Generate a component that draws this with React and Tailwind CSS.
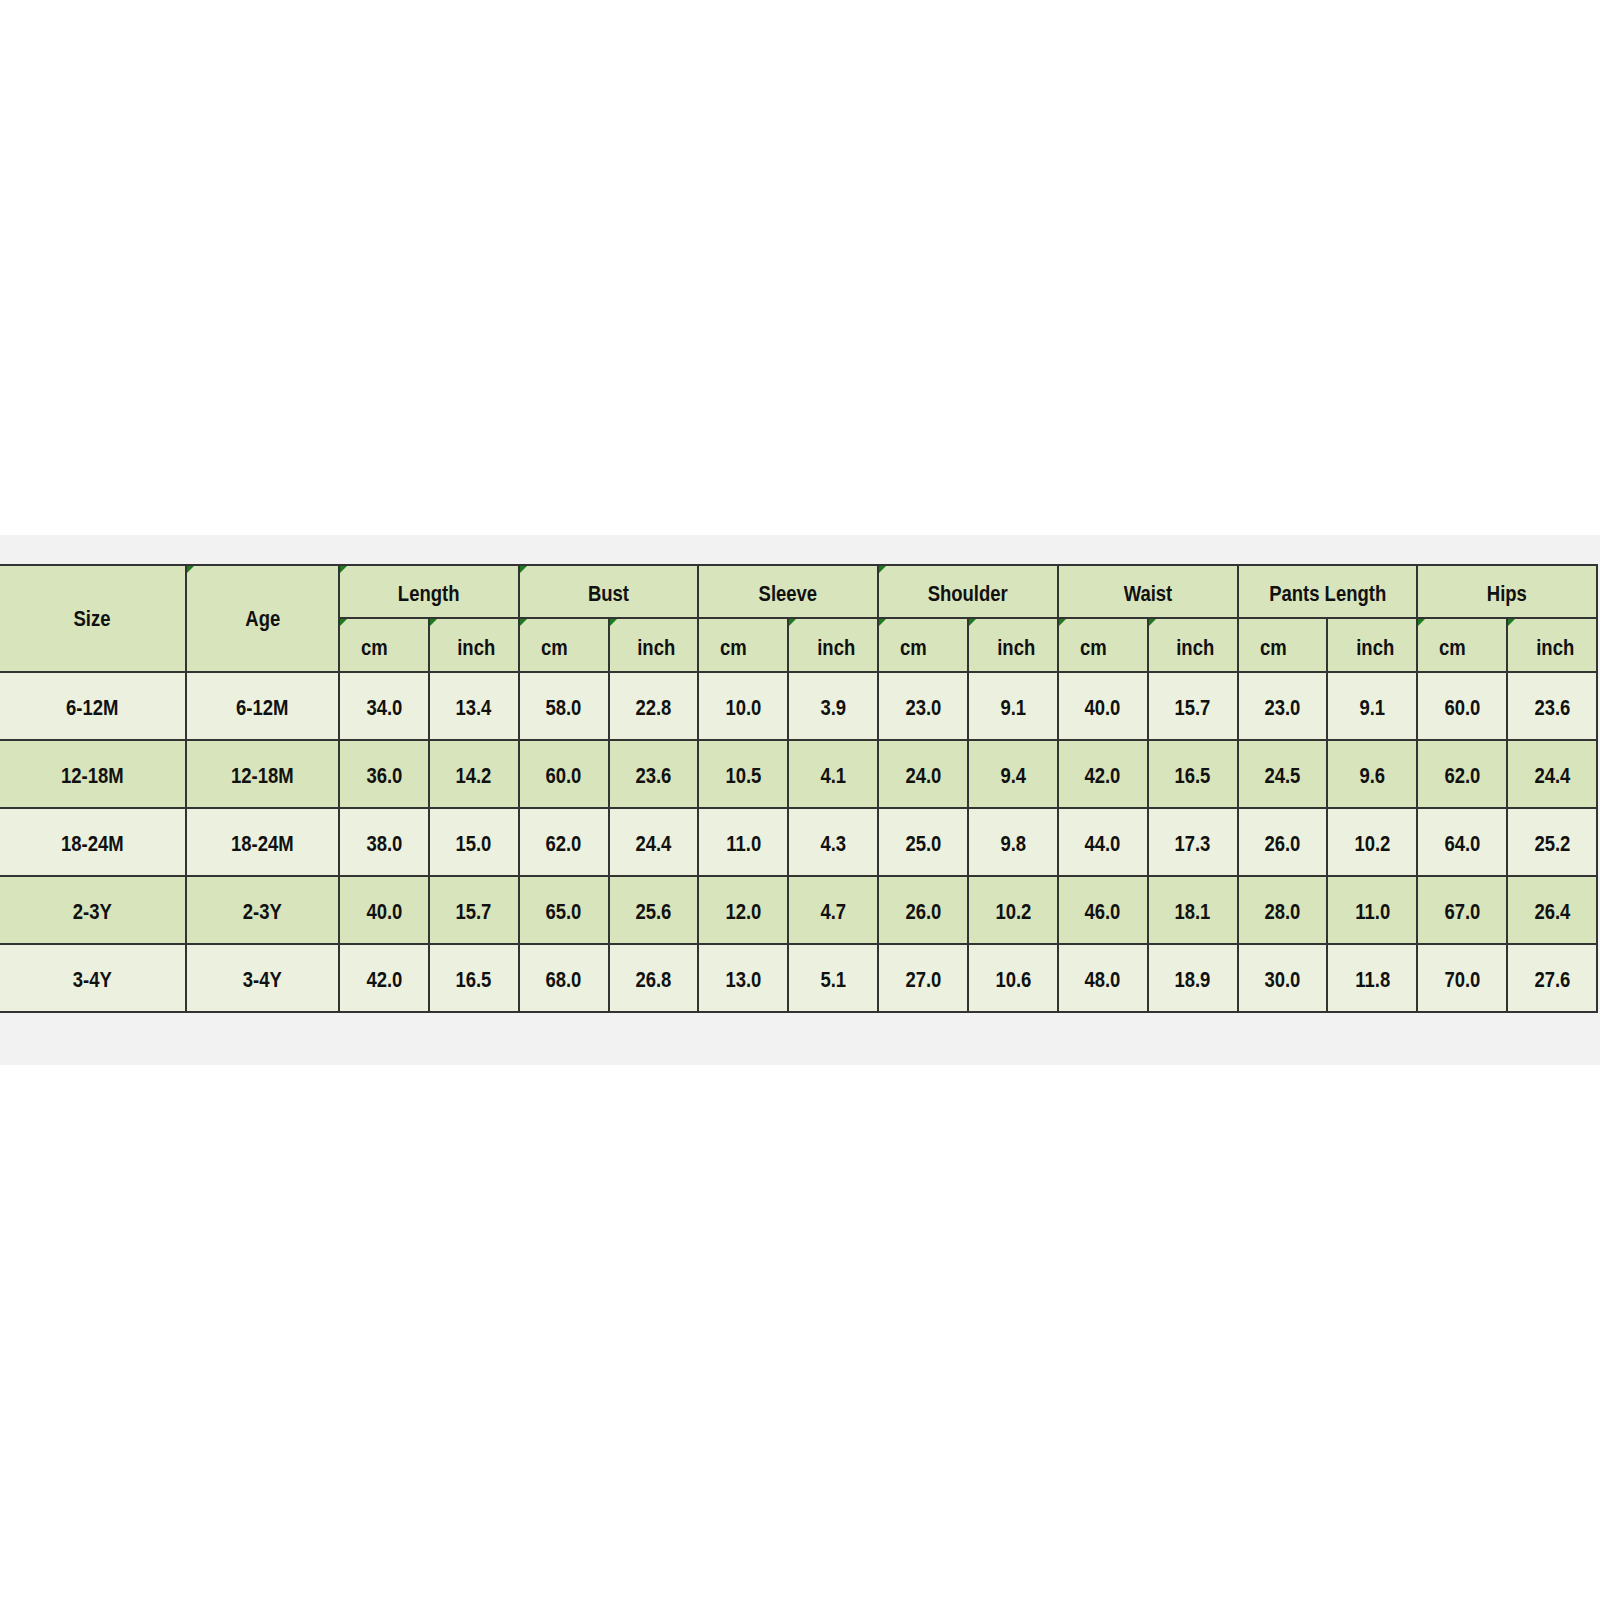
const groups = ['Length', 'Bust', 'Sleeve', 'Shoulder', 'Waist', 'Pants Length', 'Hips'];

// cells carrying the little green Excel marker
const markedGroups = ['Length', 'Bust', 'Shoulder'];
const markedUnits = [0, 1, 2, 3, 5, 6, 7, 8, 9, 12, 13];

const rows = [
  ['6-12M', '6-12M', '34.0', '13.4', '58.0', '22.8', '10.0', '3.9', '23.0', '9.1', '40.0', '15.7', '23.0', '9.1', '60.0', '23.6'],
  ['12-18M', '12-18M', '36.0', '14.2', '60.0', '23.6', '10.5', '4.1', '24.0', '9.4', '42.0', '16.5', '24.5', '9.6', '62.0', '24.4'],
  ['18-24M', '18-24M', '38.0', '15.0', '62.0', '24.4', '11.0', '4.3', '25.0', '9.8', '44.0', '17.3', '26.0', '10.2', '64.0', '25.2'],
  ['2-3Y', '2-3Y', '40.0', '15.7', '65.0', '25.6', '12.0', '4.7', '26.0', '10.2', '46.0', '18.1', '28.0', '11.0', '67.0', '26.4'],
  ['3-4Y', '3-4Y', '42.0', '16.5', '68.0', '26.8', '13.0', '5.1', '27.0', '10.6', '48.0', '18.9', '30.0', '11.8', '70.0', '27.6'],
];

function Marker() {
  return (
    <span className="absolute left-0 top-0 h-0 w-0 border-t-[7px] border-r-[7px] border-t-[#1f7a1f] border-r-transparent" />
  );
}

// condensed look of the spreadsheet font
function Txt({ children, origin = 'origin-center' }) {
  return <span className={'inline-block scale-x-[0.84] whitespace-nowrap ' + origin}>{children}</span>;
}

function App() {
  return (
    <div
      className="min-h-[1600px] w-full bg-white pt-[535px] text-[#111]"
      style={{ fontFamily: '"Liberation Sans", Arial, sans-serif' }}
    >
      <div className="bg-[#f2f2f2] pt-[29px] pb-[52px]">
        <div className="grid w-[1598px] grid-cols-[185px_151px_repeat(14,minmax(0,1fr))] grid-rows-[51px_52px_repeat(5,66px)] gap-[2px] bg-[#333] py-[2px] pr-[2px] text-[22px] font-bold">
          {/* header */}
          <div className="row-span-2 flex items-center justify-center bg-[#d8e4bc]">
            <Txt>Size</Txt>
          </div>
          <div className="relative row-span-2 flex items-center justify-center bg-[#d8e4bc]">
            <Marker />
            <Txt>Age</Txt>
          </div>
          {groups.map((g) => (
            <div key={g} className="relative col-span-2 flex items-center justify-center bg-[#d8e4bc] pt-1">
              {markedGroups.includes(g) && <Marker />}
              <Txt>{g}</Txt>
            </div>
          ))}
          {groups.flatMap((g, gi) => [
            <div key={g + 'cm'} className="relative flex items-center justify-start bg-[#d8e4bc] pl-[21px] pt-1">
              {markedUnits.includes(gi * 2) && <Marker />}
              <Txt origin="origin-left">cm</Txt>
            </div>,
            <div key={g + 'in'} className="relative flex items-center justify-end bg-[#d8e4bc] pr-[22px] pt-1">
              {markedUnits.includes(gi * 2 + 1) && <Marker />}
              <Txt origin="origin-right">inch</Txt>
            </div>,
          ])}

          {/* data rows */}
          {rows.flatMap((r, ri) =>
            r.map((v, ci) => (
              <div
                key={ri + '-' + ci}
                className={
                  'flex items-center justify-center pt-[2px] ' + (ri % 2 === 0 ? 'bg-[#ebf1de]' : 'bg-[#d8e4bc]')
                }
              >
                <Txt>{v}</Txt>
              </div>
            ))
          )}
        </div>
      </div>
    </div>
  );
}

export default App;
